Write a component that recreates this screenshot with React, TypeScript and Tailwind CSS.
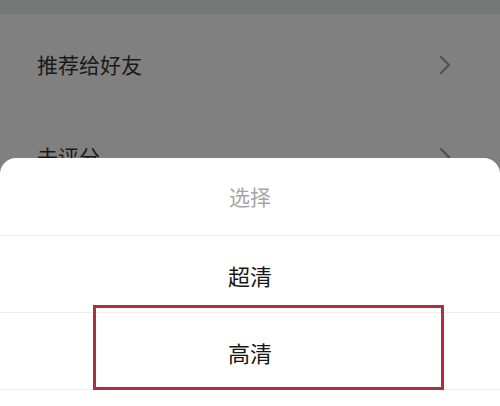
const font = { fontFamily: '"Noto Sans CJK SC", "Noto Sans", sans-serif' };

function Chevron() {
  return (
    <svg width="14" height="20" viewBox="0 0 14 20" fill="none">
      <polyline points="3,2 11,10 3,18" stroke="#505050" strokeWidth="2.2" strokeLinecap="round" strokeLinejoin="round" />
    </svg>
  );
}

const menuRows = ["推荐给好友", "去评分"];
const options = ["超清", "高清"];

export default function App() {
  return (
    <div className="relative h-[406px] w-[500px] overflow-hidden bg-[#808080]" style={font}>
      <div className="h-[14px] bg-[#767777]" />
      <div className="pt-[5px]">
        {menuRows.map((label) => (
          <div key={label} className="flex h-[92px] items-center justify-between border-b border-[#7e7e7e] pl-[37px] pr-[48px]">
            <span className="text-[21px] leading-none text-[#1a1a1a]">{label}</span>
            <Chevron />
          </div>
        ))}
      </div>

      {/* bottom sheet */}
      <div className="absolute inset-x-0 bottom-0 h-[248px] rounded-t-[16px] bg-white">
        <div className="flex h-[78px] items-center justify-center border-b border-[#f0f0f0]">
          <span className="text-[21px] leading-none text-[#a6a6a6]">选择</span>
        </div>
        {options.map((opt) => (
          <div key={opt} className="flex h-[77px] items-center justify-center border-b border-[#eeeeee] pt-[2px]">
            <span className="text-[22px] leading-none text-[#161616]">{opt}</span>
          </div>
        ))}
      </div>

      {/* annotation box */}
      <div className="absolute left-[93px] top-[305px] h-[85px] w-[351px] border-[3px] border-[#a8323e]" />
    </div>
  );
}
